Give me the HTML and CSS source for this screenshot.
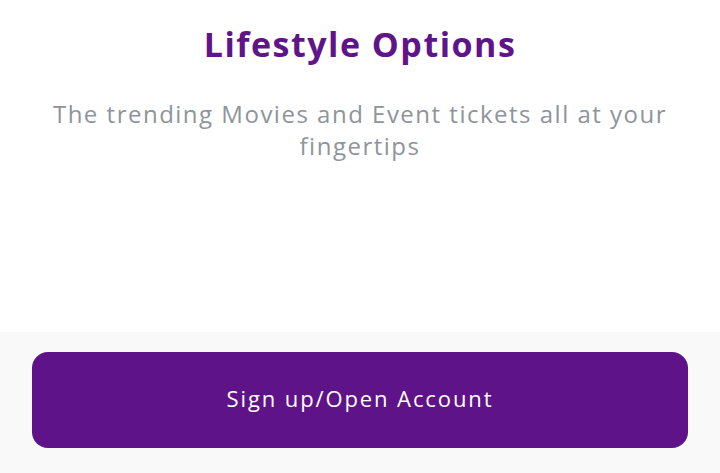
FILE: index.html
```html
<!DOCTYPE html>
<html lang="en">
<head>
    <meta charset="UTF-8">
    <meta name="viewport" content="width=device-width, initial-scale=1.0">
    <title>Lifestyle Options</title>
    <link rel="stylesheet" href="styles.css">
</head>
<body>
    <div class="screen">
        <div class="intro">
            <h1>Lifestyle Options</h1>
            <p>The trending Movies and Event tickets all at your fingertips</p>
        </div>

        <div class="footer">
            <button class="primary">Sign up/Open Account</button>
        </div>
    </div>
</body>
</html>
```

FILE: styles.css
```css
body {
    font-family: "Open Sans", Arial, sans-serif;
    background-color: white;
    margin: 0;
    padding: 0;
}

.screen {
    width: 720px;
    height: 473px;
    display: flex;
    flex-direction: column;
}

.intro {
    flex: 1;
    text-align: center;
    padding: 18px 30px 0;
}

h1 {
    margin: 0;
    font-size: 34px;
    font-weight: 700;
    letter-spacing: 1.5px;
    color: #5f1489;
    line-height: 52px;
}

.intro p {
    margin: 28px 0 0;
    font-size: 24px;
    line-height: 32px;
    letter-spacing: 1.5px;
    color: #8e949c;
}

.footer {
    background-color: #f9f9f9;
    padding: 20px 32px 25px;
}

.primary {
    display: block;
    width: 100%;
    height: 96px;
    border: none;
    border-radius: 16px;
    background-color: #5e1388;
    color: white;
    font-family: "Open Sans", Arial, sans-serif;
    font-size: 22px;
    letter-spacing: 1.9px;
    padding-top: 0;
    padding-bottom: 4px;
    cursor: pointer;
}
```
